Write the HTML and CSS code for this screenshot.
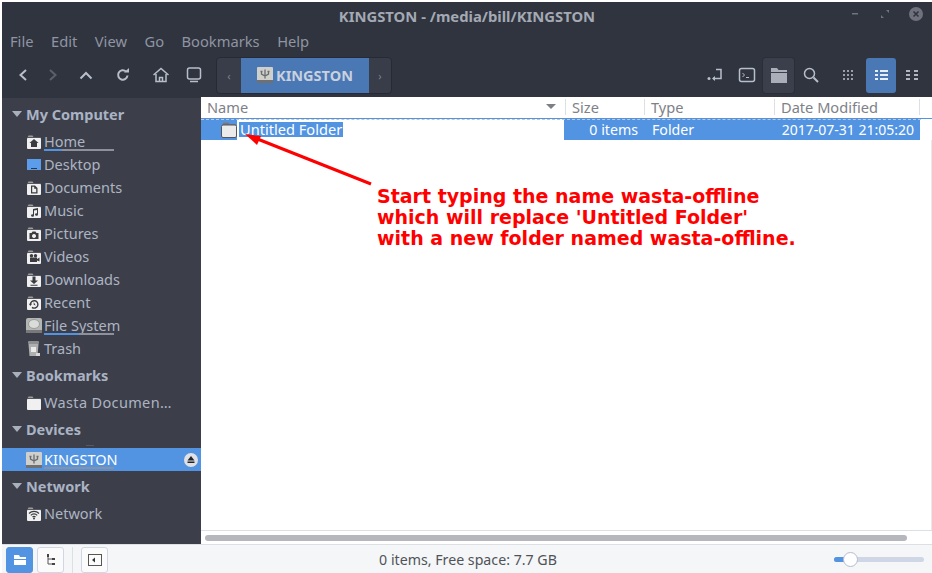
FILE: index.html
```html
<!DOCTYPE html>
<html lang="en">
<head>
	<meta charset="UTF-8">
	<title>KINGSTON - /media/bill/KINGSTON</title>
	<link rel="stylesheet" href="styles.css">
</head>
<body>
	<svg class="defs" width="0" height="0">
		<symbol id="folder" viewBox="0 0 14 14">
			<path d="M.5 2.500 1.500.5h4l1 1.500h7v2H.5z" fill="#9b9ca0"/>
			<rect y="2" width="14" height="1" fill="#55565b"/>
			<rect y="3" width="14" height="11" rx="1" fill="#f0f0f0"/>
		</symbol>
		<symbol id="usb" viewBox="0 0 16 16">
			<rect width="16" height="16" rx="1" fill="#cfcfcc"/>
			<rect y="13" width="16" height="3" fill="#6f7072"/>
			<path d="M8 2.500v9M4.500 5v2L8 9l3.500-2V5M3.500 4.500h2M10.500 4.500h2" stroke="#6a6b6e" stroke-width="1.300" fill="none"/>
		</symbol>
	</svg>
	<div id="wrap">
		<div class="titlebar">
			<span class="title">KINGSTON - /media/bill/KINGSTON</span>
			<div class="wm">
				<svg width="12" height="12" viewBox="0 0 12 12"><rect x="3" y="5" width="6" height="1.500" fill="#6f7480"/></svg>
				<svg width="12" height="12" viewBox="0 0 12 12"><path d="M7 2h3v3zM2 10V7l3 3z" fill="#6f7480"/></svg>
				<svg width="14" height="14" viewBox="0 0 14 14"><circle cx="7" cy="7" r="7" fill="#6f727c"/><path d="M4.500 4.500l5 5M9.500 4.500l-5 5" stroke="#2f343f" stroke-width="1.600"/></svg>
			</div>
		</div>
		<ul class="menubar">
			<li>File</li><li>Edit</li><li>View</li><li>Go</li><li>Bookmarks</li><li>Help</li>
		</ul>
		<div class="toolbar">
			<div class="nav">
				<svg width="16" height="16" viewBox="0 0 16 16"><path d="M11 3 5.500 8l5.500 5" class="ic"/></svg>
				<svg width="16" height="16" viewBox="0 0 16 16"><path d="M5 3l5.500 5L5 13" class="ic dim"/></svg>
				<svg width="16" height="16" viewBox="0 0 16 16"><path d="M2.500 11.500 8 6l5.500 5.500" class="ic"/></svg>
				<svg width="16" height="16" viewBox="0 0 16 16"><path d="M12.500 8.500A4.700 4.700 0 1 1 11 4.500" class="ic"/><path d="M9 5.500h5V1z" fill="#b9bfca"/></svg>
				<svg width="18" height="18" viewBox="0 0 18 18"><path d="M1.500 9 9 2.500 16.500 9M4 8v7.500h10V8M7.500 15.500v-4h3v4" class="ic thin"/></svg>
				<svg width="18" height="18" viewBox="0 0 18 18"><rect x="2.500" y="2" width="13" height="11" rx="2" class="ic thin"/><path d="M5 15.500h8" class="ic thin"/></svg>
			</div>
			<div class="path">
				<span class="path-arrow">‹</span>
				<span class="crumb"><svg width="16" height="16"><use href="#usb"/></svg>KINGSTON</span>
				<span class="path-arrow next">›</span>
			</div>
			<div class="tools">
				<span class="tool"><svg width="18" height="18" viewBox="0 0 18 18"><path d="M10 3.500h5v9H7" class="ic thin"/><path d="M9 10v5l-3-2.500z" fill="#b9bfca"/><circle cx="3" cy="12.500" r="1.500" fill="#b9bfca"/></svg></span>
				<span class="tool"><svg width="18" height="18" viewBox="0 0 18 18"><rect x="1.500" y="2.500" width="15" height="13" rx="2" class="ic thin"/><path d="M4.500 7l2 2-2 2M8 11.500h3" class="ic hair"/></svg></span>
				<span class="tool on"><svg width="18" height="18" viewBox="0 0 18 18"><path d="M1 2h6l1.500 2H17v2H1z" fill="#a9aeb9"/><rect x="1" y="7" width="16" height="10" fill="#a9aeb9"/></svg></span>
				<span class="tool"><svg width="18" height="18" viewBox="0 0 18 18"><circle cx="7.500" cy="7.500" r="5" class="ic thin"/><path d="M11.500 11.500 16 16" class="ic"/></svg></span>
				<span class="tool view"><svg width="16" height="16" viewBox="0 0 16 16"><path d="M3 3h2v2H3zM7 3h2v2H7zM11 3h2v2h-2zM3 7h2v2H3zM7 7h2v2H7zM11 7h2v2h-2zM3 11h2v2H3zM7 11h2v2H7zM11 11h2v2h-2z" fill="#9a9fab"/></svg></span>
				<span class="tool sel"><svg width="16" height="16" viewBox="0 0 16 16"><path d="M2 3h3v2H2zM7 3h8v2H7zM2 7h3v2H2zM7 7h8v2H7zM2 11h3v2H2zM7 11h8v2H7z" fill="#e6eefa"/></svg></span>
				<span class="tool"><svg width="16" height="16" viewBox="0 0 16 16"><path d="M2 3h4v2H2zM10 3h4v2h-4zM2 7h4v2H2zM10 7h4v2h-4zM2 11h4v2H2zM10 11h4v2h-4z" fill="#b0b5c0"/></svg></span>
			</div>
		</div>
		<div class="body">
			<div class="sidebar">
				<div class="group">My Computer</div>
				<div class="place"><svg width="14" height="14" viewBox="0 0 14 14"><use href="#folder" width="14" height="14"/><path d="M7 4 2.500 8H4v4h6V8h1.500z" fill="#3b3c41"/></svg><span>Home</span><i class="bar"><b style="width:25%"></b></i></div>
				<div class="place"><svg width="14" height="14" viewBox="0 0 14 14"><rect y="1" width="14" height="11" fill="#5b9ceb"/><rect x="4" y="10" width="6" height="1" fill="#33363f"/></svg><span>Desktop</span></div>
				<div class="place"><svg width="14" height="14" viewBox="0 0 14 14"><use href="#folder" width="14" height="14"/><path d="M4 4.500h4l2.500 2.500v5.500H4zM5.200 5.800v5.500h4V7.800H7.200v-2z" fill="#3b3c41" fill-rule="evenodd"/></svg><span>Documents</span></div>
				<div class="place"><svg width="14" height="14" viewBox="0 0 14 14"><use href="#folder" width="14" height="14"/><path d="M6 5l5-1v6.500a1.500 1.200 0 1 1-1-1.100V6L7 6.600v4.900a1.500 1.200 0 1 1-1-1.100z" fill="#3b3c41"/></svg><span>Music</span></div>
				<div class="place"><svg width="14" height="14" viewBox="0 0 14 14"><use href="#folder" width="14" height="14"/><path d="M2.500 6h2l1-1.500h3L9.500 6h2v6h-9zM7 7a2 2 0 1 0 .01 0z" fill="#3b3c41" fill-rule="evenodd"/></svg><span>Pictures</span></div>
				<div class="place"><svg width="14" height="14" viewBox="0 0 14 14"><use href="#folder" width="14" height="14"/><circle cx="4.500" cy="5.800" r="1.700" fill="#3b3c41"/><circle cx="8.500" cy="5.800" r="1.700" fill="#3b3c41"/><path d="M3 7.500h7v4.500H3zM10 9l2.500-1.500v4L10 10.500z" fill="#3b3c41"/></svg><span>Videos</span></div>
				<div class="place"><svg width="14" height="14" viewBox="0 0 14 14"><use href="#folder" width="14" height="14"/><path d="M5.500 3.500h3v4H11L7 11 3 7.500h2.500zM3.500 11.800h7v1h-7z" fill="#3b3c41"/></svg><span>Downloads</span></div>
				<div class="place"><svg width="14" height="14" viewBox="0 0 14 14"><use href="#folder" width="14" height="14"/><path d="M3.500 8.500A3.700 3.700 0 1 1 5 11.400" stroke="#3b3c41" stroke-width="1.400" fill="none"/><path d="M1.800 7.800h3.200L3.400 10zM6.700 6v2.700l2 .8" fill="#3b3c41"/></svg><span>Recent</span></div>
				<div class="place"><svg class="disk" width="17" height="17" viewBox="0 0 17 17"><rect y="1" width="16" height="15" rx="2" fill="#b4b6b4"/><ellipse cx="8" cy="7" rx="5.500" ry="4.500" fill="#dadcda" stroke="#9a9c9a"/><rect y="13" width="16" height="3" fill="#77797a"/></svg><span>File System</span><i class="bar"><b style="width:50%"></b></i></div>
				<div class="place"><svg width="14" height="17" viewBox="0 0 14 17"><rect x="1" y="1" width="11" height="3" rx="1" fill="#8d9091"/><path d="M1.500 4h10l-1 12h-8z" fill="#aeb0b0"/><rect x="4" y="7" width="5" height="5" fill="#eaeaea"/><rect x="9" y="13" width="4" height="3" fill="#d8d8d8"/></svg><span>Trash</span></div>
				<div class="group">Bookmarks</div>
				<div class="place"><svg width="14" height="14"><use href="#folder"/></svg><span class="long">Wasta Documen…</span></div>
				<div class="group">Devices</div>
				<div class="place sel"><svg class="stick" width="16" height="16"><use href="#usb"/></svg><span>KINGSTON</span><i class="bar"></i>
					<svg class="eject" width="14" height="14" viewBox="0 0 14 14"><circle cx="7" cy="7" r="7" fill="#dfe1e5"/><path d="M7 3 10.500 7.500h-7zM3.500 8.500h7V10h-7z" fill="#22242a"/></svg>
				</div>
				<div class="group">Network</div>
				<div class="place"><svg width="14" height="14" viewBox="0 0 14 14"><use href="#folder" width="14" height="14"/><path d="M2 6.500a7 7 0 0 1 10 0M3.800 8.300a4.500 4.500 0 0 1 6.400 0M5.500 10a2.200 2.200 0 0 1 3 0" stroke="#3b3c41" stroke-width="1.200" fill="none"/><circle cx="7" cy="11.500" r="1" fill="#3b3c41"/></svg><span>Network</span></div>
			</div>
			<div class="main">
				<div class="head">
					<span class="col c-name">Name<svg width="10" height="5" viewBox="0 0 10 5"><path d="M0 0h10L5 5z" fill="#7c7f86"/></svg></span>
					<span class="col c-size">Size</span>
					<span class="col c-type">Type</span>
					<span class="col c-date">Date Modified</span>
				</div>
				<div class="row">
					<span class="cell n-name"><span class="icon-sel"><svg width="16" height="16" viewBox="0 0 16 16"><path d="M1.500 3 2.500.5h5L8.500 2h5.500l1 1v2H1z" fill="#77787c"/><rect x=".5" y="3" width="15" height="12.500" rx="1.500" fill="#ebebeb" stroke="#55565c"/></svg></span><span class="edit">Untitled Folder</span></span>
					<span class="cell n-size">0 items</span>
					<span class="cell n-type">Folder</span>
					<span class="cell n-date">2017-07-31 21:05:20</span>
				</div>
				<div class="empty"></div>
				<div class="hscroll"><div class="thumb"></div></div>
			</div>
		</div>
		<div class="status">
			<div class="sbtns">
				<span class="sbtn active"><svg width="14" height="14" viewBox="0 0 14 14"><path d="M1 2h5l1 2h6v2H1zM1 7h12v5H1z" fill="#fff"/></svg></span>
				<span class="sbtn"><svg width="14" height="14" viewBox="0 0 14 14"><path d="M4 2v9h5M4 6h5" stroke="#555" fill="none"/><path d="M3 1h2v3H3zM8 5h3v2H8zM8 10h3v2H8z" fill="#444"/></svg></span>
				<span class="sep"></span>
				<span class="sbtn"><svg width="14" height="14" viewBox="0 0 14 14"><rect x=".5" y="1.500" width="13" height="11" fill="none" stroke="#555"/><path d="M7 4.500v5L4 7z" fill="#333"/></svg></span>
			</div>
			<span class="info">0 items, Free space: 7.7 GB</span>
			<div class="zoom"><b></b><i></i></div>
		</div>
		<div class="note">Start typing the name wasta-offline<br>which will replace 'Untitled Folder'<br>with a new folder named wasta-offline.</div>
		<svg class="pointer" width="140" height="60" viewBox="0 0 140 60"><path d="M128 55 12 9" stroke="#f00" stroke-width="3"/><path d="M2 5 18 7 14 16z" fill="#f00"/></svg>
	</div>
</body>
</html>
```
FILE: styles.css
```css
html,body{margin:0;padding:0;}
body{width:932px;height:573px;overflow:hidden;background:#fff;font-family:"Noto Sans","Open Sans",sans-serif;font-size:14.5px;}
ul{margin:0;padding:0;}
li{list-style:none;}
svg{display:block;flex:none;}
.defs{position:absolute;}
#wrap{position:relative;margin:2px 0 0 2px;height:571px;background:#2f343f;display:flex;flex-direction:column;}

.titlebar{height:28px;display:flex;align-items:center;justify-content:center;position:relative;flex:none;}
.title{color:#a4a9b3;font-weight:700;font-size:14.800px;}
.wm{position:absolute;right:9px;top:5px;display:flex;align-items:center;gap:18px;}
.menubar{height:25px;box-sizing:border-box;padding:0 0 3px 8px;display:flex;gap:17.500px;color:#8f95a2;align-items:center;font-size:14.700px;flex:none;}

.toolbar{height:42px;box-sizing:border-box;padding:0 4px 2px 13px;display:flex;align-items:center;flex:none;}
.nav{display:flex;align-items:center;width:201px;}
.nav svg:nth-child(2){margin-left:14px;}
.nav svg:nth-child(3){margin-left:17px;}
.nav svg:nth-child(4){margin-left:21px;}
.nav svg:nth-child(5){margin-left:21px;}
.nav svg:nth-child(6){margin-left:15px;}
.ic{fill:none;stroke:#b9bfca;stroke-width:2;}
.ic.dim{stroke:#5b606b;}
.ic.thin{stroke-width:1.500;}
.ic.hair{stroke-width:1;}
.path{display:flex;height:35px;border-radius:4px;background:#383d49;border:1px solid #262a33;}
.path-arrow{width:24px;color:#7c818c;font-size:11px;display:flex;align-items:center;justify-content:center;}
.path-arrow.next{width:22px;}
.crumb{width:128px;background:#4a78b5;color:#c9d1dd;font-weight:700;display:flex;align-items:center;justify-content:center;gap:3px;font-size:14.500px;}
.tools{margin-left:auto;display:flex;align-items:center;}
.tool{width:32px;height:35px;display:flex;align-items:center;justify-content:center;border-radius:3px;}
.tool.on{width:31px;margin-right:1px;background:#3a3f4b;box-shadow:0 0 0 1px #2a2e38;}
.tool.view{margin-left:5px;}
.tool.sel{width:30px;margin-left:2px;background:#4a78b5;}

.body{flex:1;display:flex;min-height:0;}
.sidebar{width:199px;margin-top:1px;padding-top:1px;background:#3c3f4a;color:#adb4c2;flex:none;box-sizing:border-box;}
.group{height:31px;box-sizing:border-box;padding:0 0 2px 24px;display:flex;align-items:center;font-weight:700;color:#aab3c4;position:relative;}
.group::before{content:"";position:absolute;left:10px;top:12px;border:5px solid transparent;border-top:6px solid #a9afbb;border-bottom:0;}
.place{height:23px;display:flex;align-items:center;padding-left:25px;gap:3px;position:relative;}
.place span{line-height:23px;}
.place .disk{margin:0 -2px 0 -1px;}
.place .stick{margin:0 -1px;}
.place .long{letter-spacing:.35px;}
.place.sel{background:#5294e2;color:#fff;margin-top:3px;}
.place.sel::before{content:"";position:absolute;left:84px;top:-3px;width:8px;height:1px;background:#555963;}
.bar{position:absolute;left:42px;top:19px;width:70px;height:2px;background:#8d919b;}
.bar b{display:block;height:2px;background:#5294e2;}
.eject{position:absolute;right:3px;top:5px;}

.main{flex:1;background:#fff;display:flex;flex-direction:column;}
.head{height:19px;padding-bottom:2px;display:flex;align-items:center;color:#7e8188;border-bottom:1px solid #5294e2;flex:none;font-size:14.600px;}
.col,.cell{box-sizing:border-box;flex:none;}
.col{height:16px;line-height:16px;padding-left:6px;border-right:1px solid #dcdfe3;display:flex;align-items:center;justify-content:space-between;}
.col svg{margin-right:9px;}
.c-name{width:365px;}
.c-size{width:79px;}
.c-type{width:130px;}
.c-date{width:145px;}
.row{height:21px;display:flex;flex:none;color:#fff;line-height:21px;position:relative;font-size:14.200px;}
.row::after{content:"";position:absolute;left:0;right:11px;top:0;border-top:1px dashed #c4c8ce;}
.cell{background:#5294e2;}
.cell.n-name{width:363px;display:flex;align-items:center;background:none;}
.icon-sel{width:36px;height:21px;background:#5294e2;display:flex;justify-content:flex-end;align-items:center;}
.edit{background:#5294e2;margin-left:2px;padding:0 1px;font-size:14.600px;line-height:15px;}
.n-size{width:81px;text-align:right;padding-right:7px;}
.n-type{width:130px;padding-left:7px;}
.n-date{width:145px;text-align:right;padding-right:6px;font-size:14px;}
.empty{flex:1;border-right:1px solid #e8e9eb;}
.hscroll{height:13px;border-top:1px solid #dcdfe3;display:flex;align-items:center;flex:none;}
.thumb{width:702px;height:6px;margin-left:4px;border-radius:3px;background:#b5b7bc;}

.status{height:29px;padding-left:2px;background:#f5f6f7;border-top:1px solid #dcdfe3;display:flex;align-items:center;justify-content:center;position:relative;color:#4f5359;flex:none;box-sizing:border-box;font-size:14.200px;}
.sbtns{position:absolute;left:4px;top:2px;display:flex;gap:4px;align-items:center;}
.sbtn{width:27px;height:26px;box-sizing:border-box;border:1px solid #cfd6e6;border-radius:3px;background:#fbfbfc;display:flex;align-items:center;justify-content:center;}
.sbtn.active{background:#5294e2;border-color:#5294e2;}
.sep{width:1px;height:26px;background:#dcdfe3;margin:0 4px;}
.zoom{position:absolute;right:8px;top:12px;width:90px;height:5px;border-radius:3px;background:#cfd6e6;}
.zoom b{display:block;width:12px;height:5px;border-radius:3px 0 0 3px;background:#5294e2;}
.zoom i{position:absolute;left:9px;top:-5px;width:15px;height:15px;box-sizing:border-box;border-radius:50%;background:#fff;border:1px solid #b5bcd0;}

.note{position:absolute;left:375px;top:184px;color:#f00;font-family:"DejaVu Sans",sans-serif;font-weight:700;font-size:19px;line-height:21px;white-space:nowrap;}
.pointer{position:absolute;left:241px;top:127px;}
```
